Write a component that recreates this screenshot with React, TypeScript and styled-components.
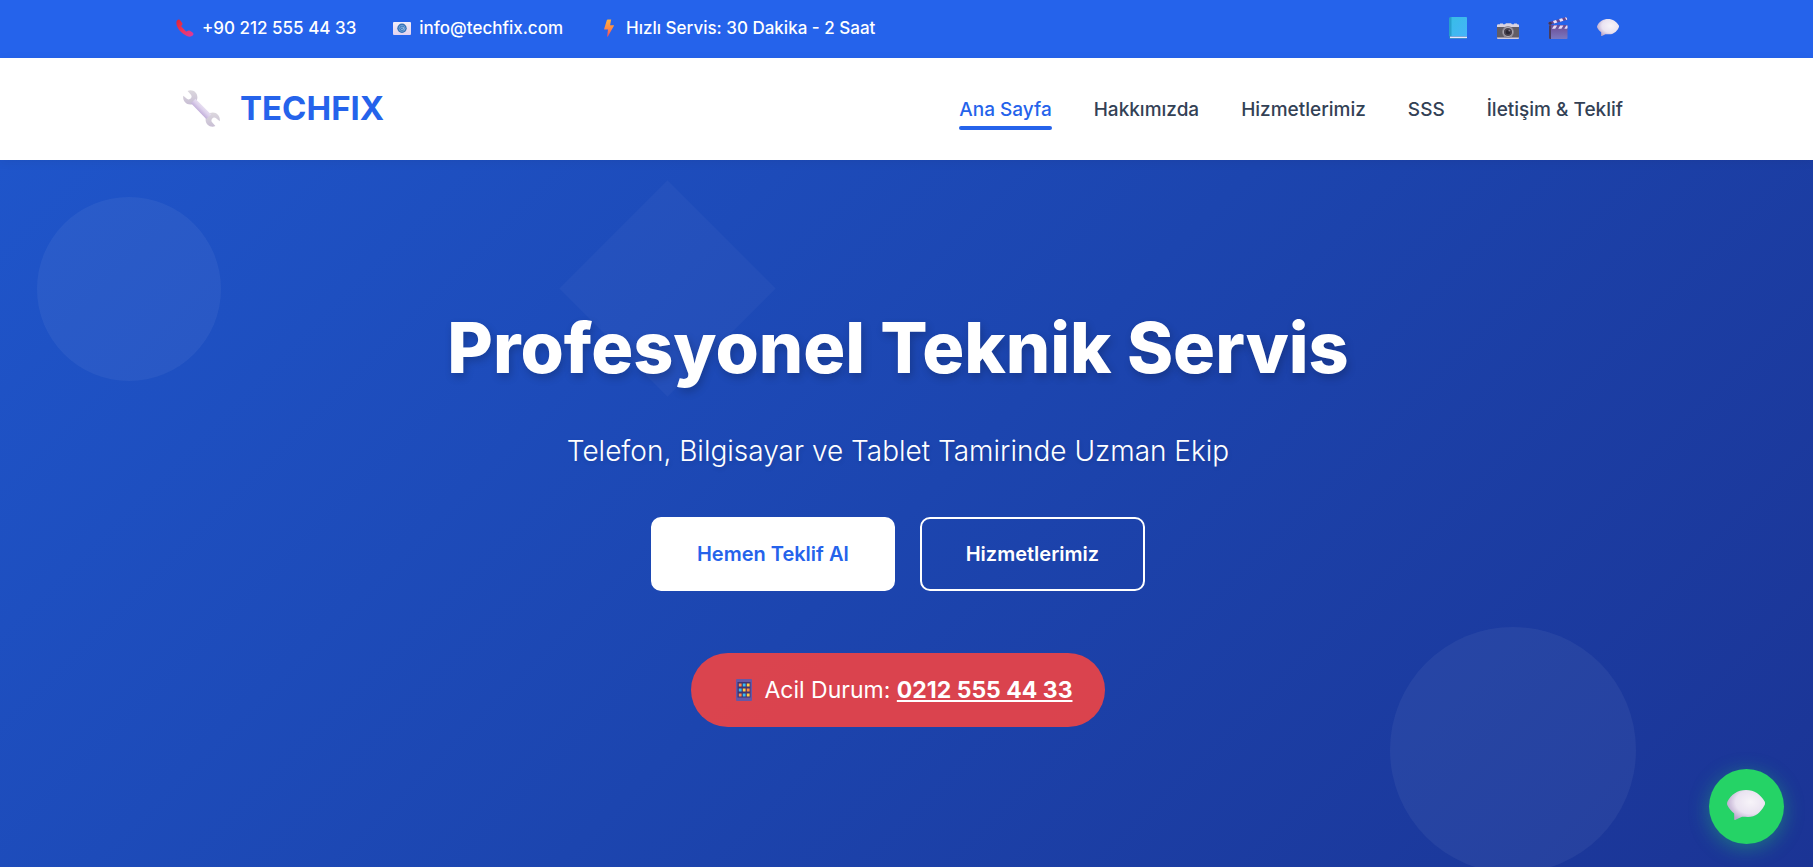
import React from "react";
import styled, { createGlobalStyle, css } from "styled-components";

const GlobalStyle = createGlobalStyle`
  *, *::before, *::after { box-sizing: border-box; }
  html, body, #root { margin: 0; min-height: 100%; }
  body {
    font-family: Inter, "Noto Sans", sans-serif;
    color: #334155;
    background: #1b3a9b;
  }
  a { color: inherit; text-decoration: none; }
  svg { display: block; }
`;

const Page = styled.div`
  display: flex;
  flex-direction: column;
  min-height: 100vh;
  overflow: hidden;
`;

/* Full-width bands keep a 17px gutter on the right for the scrollbar */
const band = css`
  padding-right: 17px;
`;

const Container = styled.div`
  display: flex;
  align-items: center;
  justify-content: space-between;
  width: 100%;
  max-width: 1450px;
  margin: 0 auto;
`;

const TopBar = styled.div`
  ${band}
  background: #2563eb;
  color: #fff;
`;

const TopBarInner = styled(Container)`
  height: 58px;
  padding-bottom: 2px;
`;

const ContactList = styled.div`
  display: flex;
  gap: 34px;
`;

const ContactItem = styled.span`
  display: flex;
  align-items: center;
  gap: 5px;
  font-size: 17px;
  font-weight: 500;
  line-height: 24px;
  white-space: nowrap;
`;

const IconBox = styled.span<{ $width: number }>`
  display: flex;
  flex: none;
  justify-content: center;
  width: ${(p) => p.$width}px;
`;

const SocialList = styled.div`
  display: flex;
  gap: 20px;
`;

const SocialLink = styled.a`
  display: flex;
  align-items: center;
  justify-content: center;
  width: 30px;
  height: 30px;
`;

const Header = styled.header`
  ${band}
  position: relative;
  z-index: 1;
  background: #fff;
  box-shadow: 0 2px 10px rgba(0, 0, 0, 0.06);
`;

const HeaderInner = styled(Container)`
  height: 102px;
`;

const Logo = styled.a`
  display: flex;
  align-items: center;
  gap: 14px;
  padding-left: 3px;
  padding-bottom: 2px;
  color: #2563eb;
  font-size: 33px;
  font-weight: 700;
  line-height: 40px;
`;

const Nav = styled.nav`
  display: flex;
  gap: 42px;
`;

const NavLink = styled.a<{ $active?: boolean }>`
  display: flex;
  flex-direction: column;
  gap: 3px;
  padding-top: 9px;
  color: ${(p) => (p.$active ? "#2563eb" : "#334155")};
  font-size: 19px;
  font-weight: 500;
  line-height: 26px;
  white-space: nowrap;

  &::after {
    content: "";
    height: 4px;
    border-radius: 2px;
    background: ${(p) => (p.$active ? "#2563eb" : "transparent")};
  }
`;

const Hero = styled.section`
  ${band}
  position: relative;
  flex: 1;
  display: flex;
  flex-direction: column;
  align-items: center;
  padding-top: 144px;
  padding-bottom: 140px;
  overflow: hidden;
  background: linear-gradient(135deg, #1f55ca 0%, #1c45af 50%, #1b3495 100%);
  color: #fff;
  text-align: center;
`;

const Shape = styled.span`
  position: absolute;
  display: block;
`;

const CircleLeft = styled(Shape)`
  top: 37px;
  left: 37px;
  width: 184px;
  height: 184px;
  border-radius: 50%;
  background: rgba(255, 255, 255, 0.05);
`;

const Diamond = styled(Shape)`
  top: 52px;
  left: 591px;
  width: 153px;
  height: 153px;
  background: rgba(255, 255, 255, 0.03);
  transform: rotate(45deg);
`;

const CircleRight = styled(Shape)`
  bottom: -6px;
  right: 177px;
  width: 246px;
  height: 246px;
  border-radius: 50%;
  background: rgba(255, 255, 255, 0.05);
`;

const Title = styled.h1`
  position: relative;
  margin: 0;
  font-size: 70px;
  font-weight: 800;
  line-height: 88px;
  text-shadow: 2px 4px 8px rgba(0, 0, 0, 0.2);
`;

const Subtitle = styled.p`
  position: relative;
  margin: 39px 0 0;
  font-size: 28px;
  font-weight: 350;
  line-height: 40px;
  text-shadow: 1px 2px 4px rgba(0, 0, 0, 0.1);
`;

const Actions = styled.div`
  position: relative;
  display: flex;
  gap: 25px;
  margin-top: 46px;
`;

const ActionLink = styled.a<{ $solid?: boolean }>`
  display: flex;
  align-items: center;
  justify-content: center;
  height: 74px;
  padding: 0 44px;
  border: 2px solid #fff;
  border-radius: 10px;
  background: ${(p) => (p.$solid ? "#fff" : "transparent")};
  color: ${(p) => (p.$solid ? "#2563eb" : "#fff")};
  font-size: 20px;
  font-weight: 600;
  line-height: 32px;
`;

const Emergency = styled.div`
  position: relative;
  display: flex;
  align-items: center;
  gap: 6px;
  height: 74px;
  margin-top: 62px;
  padding: 0 33px 0 38px;
  border-radius: 37px;
  background: rgba(239, 68, 68, 0.9);
  font-size: 23px;
  line-height: 32px;
`;

const EmergencyNumber = styled.a`
  font-weight: 700;
  text-decoration: underline;
`;

const ChatButton = styled.button`
  position: fixed;
  right: 29px;
  bottom: 23px;
  z-index: 2;
  display: flex;
  align-items: center;
  justify-content: center;
  width: 75px;
  height: 75px;
  padding: 0 2px 4px 0;
  border: 0;
  border-radius: 50%;
  background: #25d366;
  box-shadow: 0 4px 20px rgba(37, 211, 102, 0.4);
  cursor: pointer;
`;

const PhoneIcon = () => (
  <svg width="18" height="18" viewBox="0 0 18 18" aria-hidden="true">
    <defs>
      <linearGradient id="phone" x1="0" y1="0" x2="1" y2="1">
        <stop offset="0" stopColor="#d8243c" />
        <stop offset="0.5" stopColor="#f0355a" />
        <stop offset="1" stopColor="#d93aa6" />
      </linearGradient>
    </defs>
    <path
      d="M1 1.6C2 .3 3.6.3 4.400 1.400L6.200 4c.6 1 .3 1.900-.5 2.500-.6.5-.4 1 .1 1.600l3.800 3.900c.7.7 1.200.8 1.800.1.6-.7 1.500-1 2.500-.4l2.700 1.800c1.100.8 1.100 2.200.1 3.100-2 1.800-5.400 1.300-9.200-1.500C3.200 12.200.3 7.500.4 3.900.4 3 .5 2.300 1 1.600Z"
      fill="url(#phone)"
    />
  </svg>
);

const MailIcon = () => (
  <svg width="18" height="13" viewBox="0 0 18 13" aria-hidden="true">
    <defs>
      <linearGradient id="mail" x1="0" y1="0" x2="0" y2="1">
        <stop offset="0" stopColor="#f3eef8" />
        <stop offset="1" stopColor="#e2d2ef" />
      </linearGradient>
    </defs>
    <rect width="18" height="13" rx="1" fill="url(#mail)" />
    <circle cx="9" cy="6.300" r="4.700" fill="#3472b8" />
    <circle cx="9" cy="6.300" r="3" fill="none" stroke="#86b4e2" strokeWidth="0.700" />
    <circle cx="9" cy="6.300" r="1.300" fill="none" stroke="#a9cbec" strokeWidth="0.700" />
    <path d="M10.400 5v1.900c0 .8 1.300.7 1.500-.4" fill="none" stroke="#a9cbec" strokeWidth="0.700" />
  </svg>
);

const BoltIcon = () => (
  <svg width="10" height="18" viewBox="0 0 10 18" aria-hidden="true">
    <defs>
      <linearGradient id="bolt" x1="0" y1="0" x2="0" y2="1">
        <stop offset="0" stopColor="#ffb13d" />
        <stop offset="0.500" stopColor="#ff8b44" />
        <stop offset="1" stopColor="#ef4a62" />
      </linearGradient>
    </defs>
    <path d="M3.600.4h3.600L6.100 6.200h3.400c.5 0 .6.4.3.8L3.900 17.400c-.3.5-.8.3-.7-.3L4 10.600H.7c-.5 0-.7-.3-.5-.8L2.900 1Z" fill="url(#bolt)" />
  </svg>
);

const BookIcon = () => (
  <svg width="18" height="22" viewBox="0 0 18 22" aria-hidden="true">
    <defs>
      <linearGradient id="book" x1="0" y1="0" x2="1" y2="1">
        <stop offset="0" stopColor="#38bde6" />
        <stop offset="1" stopColor="#45b4fa" />
      </linearGradient>
    </defs>
    <path d="M1.500 0H17a1 1 0 0 1 1 1v20a1 1 0 0 1-1 1H1.500A1.500 1.500 0 0 1 0 20.500v-19A1.500 1.500 0 0 1 1.500 0Z" fill="#2a83c8" />
    <path d="M2 0h15a1 1 0 0 1 1 1v18H2Z" fill="url(#book)" />
    <path d="M0 1.500Q.2 0 1.500 0h1v19H0Z" fill="#279fce" />
    <path d="M1 19.600h17v1.500H1Z" fill="#e9e6fa" />
  </svg>
);

const CameraIcon = () => (
  <svg width="22" height="22" viewBox="0 -6 22 22" aria-hidden="true">
    <path d="M3 1.200V.6h3v.6h2L9 .2h5l1 1h2V.6h3v.6h1.200L22 2v2.500H0V2l.8-.8Z" fill="#d9d3df" />
    <rect y="4" width="22" height="11" fill="#625d65" />
    <path d="M0 14.500h22V15q0 1-1 1H1q-1 0-1-1Z" fill="#d3cad9" />
    <circle cx="11" cy="9" r="5.900" fill="#8f8a94" />
    <circle cx="11" cy="9" r="4.700" fill="#c0bac4" />
    <circle cx="11" cy="9" r="4.100" fill="#49434f" />
    <circle cx="11" cy="9" r="2.300" fill="#2c2734" />
    <circle cx="12.300" cy="7.600" r="0.900" fill="#88808f" />
  </svg>
);

const ClapperIcon = () => (
  <svg width="20" height="22" viewBox="0 0 20 22" aria-hidden="true">
    <defs>
      <linearGradient id="clap" x1="0" y1="0" x2="0" y2="1">
        <stop offset="0" stopColor="#6b4b93" />
        <stop offset="1" stopColor="#7b78c0" />
      </linearGradient>
    </defs>
    <rect x="1" y="8" width="18.500" height="14" rx="1" fill="url(#clap)" />
    <path d="M1 8.500h2V22H2q-1 0-1-1Z" fill="#493c5d" />
    <path d="M.4 5.200 17.600.3q1.100-.2 1.400.8l.3 1.600L1.800 7.700.6 7.200Z" fill="#69468d" />
    <path d="m5 3.900 3-.9 1.300 2.500-3.100.9Zm6.100-1.800 3-.8 1.300 2.500-3.100.9ZM17 .5l1-.2 1 1 .2 1.400-.9.200Z" fill="#ece2fa" />
    <path d="m6 8.500 3.200 0-2 3.200H4ZM12.200 8.500h3.200l-2 3.200h-3.200ZM18.300 8.500h1.200v2.600l-.5.600h-2.700Z" fill="#e6daf7" />
    <circle cx="2.200" cy="6.200" r="1.500" fill="#41374f" />
  </svg>
);

type BubbleProps = { width: number; height: number; id: string; viewBox?: string };

const BubbleIcon = ({ width, height, id, viewBox = "0 0 38 30" }: BubbleProps) => (
  <svg width={width} height={height} viewBox={viewBox} preserveAspectRatio="none" aria-hidden="true">
    <defs>
      <radialGradient id={id} cx="0.620" cy="0.400" r="0.660">
        <stop offset="0" stopColor="#f7f4f9" />
        <stop offset="0.600" stopColor="#eae3f1" />
        <stop offset="1" stopColor="#b9a5cc" />
      </radialGradient>
    </defs>
    <path
      d="M19 0c8.500 0 14.500 4.600 18.500 11.200 1 1.700.6 3-.3 4.600C33.600 22.600 28.600 27 21 27c-2.600 0-4.700-.2-6.500-.1L8.500 29.800c-1 .5-1.400 0-1.300-1v-5.200C4.400 21.400 2 18.500.5 15.600c-.7-1.400-.6-2.900.1-4.300C4 4.600 10.500 0 19 0Z"
      fill={`url(#${id})`}
    />
  </svg>
);

const WrenchIcon = () => (
  <svg width="37" height="37" viewBox="0 0 37 37" aria-hidden="true">
    <defs>
      <linearGradient id="wrenchHead" x1="0" y1="0" x2="0" y2="1">
        <stop offset="0" stopColor="#dcd8de" />
        <stop offset="1" stopColor="#c8bed4" />
      </linearGradient>
      <linearGradient id="wrenchShaft" gradientUnits="userSpaceOnUse" x1="20" y1="15" x2="15" y2="20">
        <stop offset="0" stopColor="#eae3f2" />
        <stop offset="0.500" stopColor="#ddd1ec" />
        <stop offset="1" stopColor="#c5b3dc" />
      </linearGradient>
    </defs>
    <path
      d="M4.600 1C9-1.200 14.400 1.900 14.400 7.200c0 4.300-3.200 7.300-7.200 7.300C2.600 14.500-.6 10.200.3 5.700l3.600 3c1.200 1 2.800.9 3.800-.1 1.100-1.100 1.200-2.700.2-3.900Z"
      fill="url(#wrenchHead)"
    />
    <path
      d="M32.400 36C28 38.200 22.600 35.100 22.600 29.800c0-4.300 3.200-7.300 7.200-7.300 4.600 0 7.800 4.300 6.900 8.800l-3.600-3c-1.200-1-2.800-.9-3.800.1-1.100 1.100-1.200 2.700-.2 3.900Z"
      fill="url(#wrenchHead)"
    />
    <path d="M12.400 8.800 28.200 24.400l-5 4.600L8 13.300Z" fill="url(#wrenchShaft)" />
  </svg>
);

const MobileIcon = () => {
  const colours = ["#ff8a45", "#35bdf5", "#ffcb45", "#35bdf5", "#ffcb45", "#ff8a45", "#ff8a45", "#35bdf5", "#ffcb45"];
  return (
    <svg width="16" height="22" viewBox="0 0 16 22" aria-hidden="true">
      <rect width="16" height="22" rx="1" fill="#6558a6" />
      <rect x="1.500" y="3" width="13" height="15.500" fill="#41336f" />
      {colours.map((c, i) => (
        <rect key={i} x={2.8 + (i % 3) * 4} y={4.5 + Math.floor(i / 3) * 5} width="2.800" height="3" fill={c} />
      ))}
    </svg>
  );
};

const navItems = ["Ana Sayfa", "Hakkımızda", "Hizmetlerimiz", "SSS", "İletişim & Teklif"];

export default function App() {
  return (
    <Page>
      <GlobalStyle />
      <TopBar>
        <TopBarInner>
          <ContactList>
            <ContactItem>
              <IconBox $width={24}><PhoneIcon /></IconBox>
              +90 212 555 44 33
            </ContactItem>
            <ContactItem>
              <IconBox $width={24}><MailIcon /></IconBox>
              info@techfix.com
            </ContactItem>
            <ContactItem>
              <IconBox $width={24}><BoltIcon /></IconBox>
              Hızlı Servis: 30 Dakika - 2 Saat
            </ContactItem>
          </ContactList>
          <SocialList>
            <SocialLink href="#facebook" aria-label="Facebook"><BookIcon /></SocialLink>
            <SocialLink href="#instagram" aria-label="Instagram"><CameraIcon /></SocialLink>
            <SocialLink href="#video" aria-label="Video"><ClapperIcon /></SocialLink>
            <SocialLink href="#whatsapp" aria-label="WhatsApp">
              <BubbleIcon id="bubbleSmall" width={22} height={22} viewBox="0 -3.5 38 38.8" />
            </SocialLink>
          </SocialList>
        </TopBarInner>
      </TopBar>

      <Header>
        <HeaderInner>
          <Logo href="#">
            <IconBox $width={50}><WrenchIcon /></IconBox>
            TECHFIX
          </Logo>
          <Nav>
            {navItems.map((item, i) => (
              <NavLink key={item} href="#" $active={i === 0}>{item}</NavLink>
            ))}
          </Nav>
        </HeaderInner>
      </Header>

      <Hero>
        <CircleLeft />
        <Diamond />
        <CircleRight />
        <Title>Profesyonel Teknik Servis</Title>
        <Subtitle>Telefon, Bilgisayar ve Tablet Tamirinde Uzman Ekip</Subtitle>
        <Actions>
          <ActionLink href="#teklif" $solid>Hemen Teklif Al</ActionLink>
          <ActionLink href="#hizmetler">Hizmetlerimiz</ActionLink>
        </Actions>
        <Emergency>
          <IconBox $width={30}><MobileIcon /></IconBox>
          <span>
            Acil Durum: <EmergencyNumber href="tel:02125554433">0212 555 44 33</EmergencyNumber>
          </span>
        </Emergency>
      </Hero>

      <ChatButton type="button" aria-label="WhatsApp">
        <BubbleIcon id="bubbleLarge" width={38} height={30} />
      </ChatButton>
    </Page>
  );
}
